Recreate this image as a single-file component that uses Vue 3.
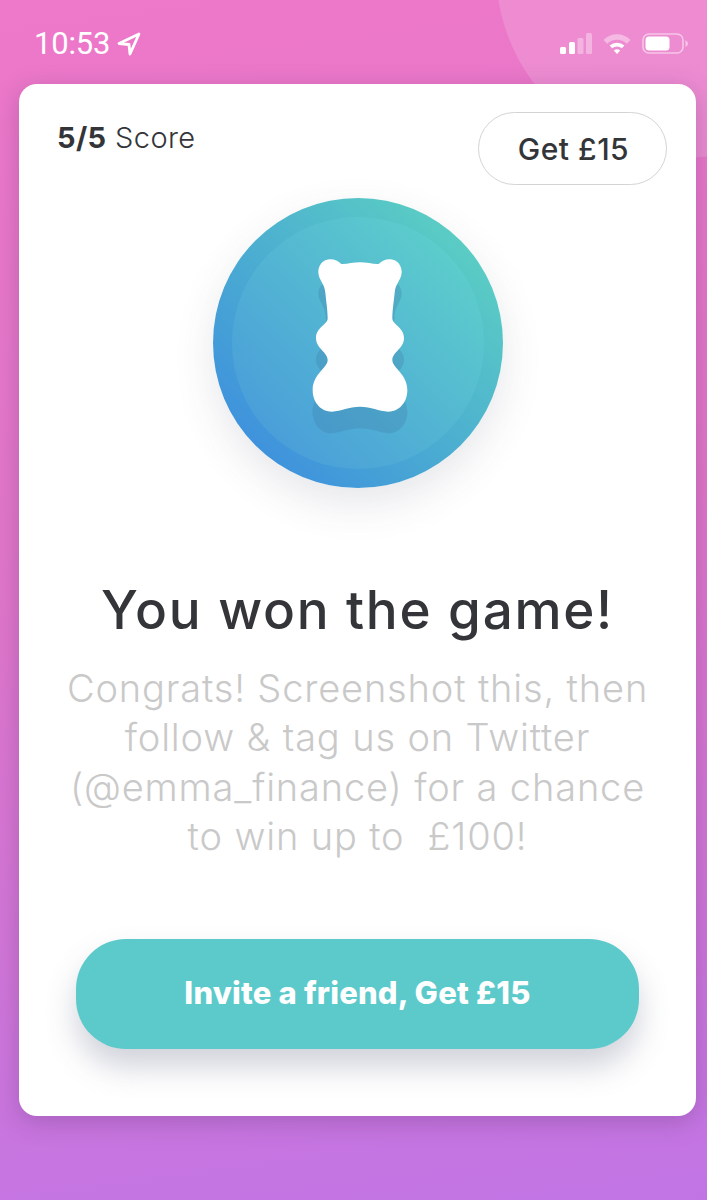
<script setup>
const lines = ['Congrats! Screenshot this, then', 'follow & tag us on Twitter', '(@emma_finance) for a chance', 'to win up to  £100!']
const bear = 'M180 37 C160 37 140 43 124 42 C114 32 102 27 88 28 C68 30 55 46 55 66 C55 90 74 100 76 128 C78 150 83 180 83 205 C83 224 48 232 48 264 C48 296 83 306 83 330 C83 354 38 372 38 420 C38 460 65 485 95 485 C125 483 145 470 180 470 C215 470 235 483 265 485 C295 485 322 460 322 420 C322 372 277 354 277 330 C277 306 312 296 312 264 C312 232 277 224 277 205 C277 180 282 150 284 128 C286 100 305 90 305 66 C305 46 292 30 272 28 C258 27 246 32 236 42 C220 43 200 37 180 37 Z'
</script>

<template>
  <div class="screen">
    <div class="deco"></div>
    <header class="status">
      <div class="clock">
        <span class="time">10:53</span>
        <svg class="arrow" width="24" height="24" viewBox="0 0 24 24">
          <path d="M22 2 L2 11.5 L12 12.5 L13 22 Z" fill="none" stroke="#fff" stroke-width="2.8" stroke-linejoin="round" />
        </svg>
      </div>
      <div class="indicators">
        <svg width="32" height="21" viewBox="0 0 32 21">
          <rect x="0" y="14" width="6" height="7" rx="1.5" fill="#fff" />
          <rect x="9" y="9" width="6" height="12" rx="1.5" fill="#fff" />
          <rect x="17.500" y="5" width="6" height="16" rx="1.5" fill="#fff" opacity=".35" />
          <rect x="26" y="0" width="6" height="21" rx="1.5" fill="#fff" opacity=".35" />
        </svg>
        <svg width="28" height="21" viewBox="0 0 28 21">
          <path d="M0.500 7 A19 19 0 0 1 27.500 7 L23.800 10.800 A14 14 0 0 0 4.200 10.800 Z" fill="#fff" opacity=".4" />
          <path d="M6.600 12.600 A11 11 0 0 1 21.400 12.600 L18.800 15.300 A7 7 0 0 0 9.200 15.300 Z" fill="#fff" />
          <path d="M14 21 L10.800 17.500 A5 5 0 0 1 17.200 17.500 Z" fill="#fff" />
        </svg>
        <svg width="46" height="21" viewBox="0 0 46 21">
          <rect x="1" y="1" width="40" height="19" rx="6" fill="none" stroke="#fff" stroke-opacity=".5" stroke-width="1.6" />
          <rect x="3.500" y="3.500" width="24" height="14" rx="3.500" fill="#fff" />
          <path d="M43.500 7 Q46 8.500 46 10.500 Q46 12.500 43.500 14 Z" fill="#fff" opacity=".5" />
        </svg>
      </div>
    </header>

    <main class="card">
      <div class="top">
        <p class="score"><strong>5/5</strong> Score</p>
        <button class="get">Get £15</button>
      </div>

      <div class="medal">
        <svg width="290" height="290" viewBox="39 24 870 870">
          <defs>
            <linearGradient id="outer" x1="0.15" y1="0.85" x2="0.85" y2="0.15">
              <stop offset="0" stop-color="#3f93dc" />
              <stop offset="1" stop-color="#5accc4" />
            </linearGradient>
            <linearGradient id="inner" x1="0.15" y1="0.85" x2="0.85" y2="0.15">
              <stop offset="0" stop-color="#4a9fd9" />
              <stop offset="1" stop-color="#5ccccc" />
            </linearGradient>
          </defs>
          <circle cx="474" cy="459" r="435" fill="url(#outer)" />
          <circle cx="474" cy="459" r="378" fill="url(#inner)" />
          <g transform="translate(300 180)">
            <path :d="bear" fill="#3f7fa8" opacity=".3" transform="translate(0 65)" />
            <path :d="bear" fill="#fff" />
          </g>
        </svg>
      </div>

      <h1 class="title">You won the game!</h1>
      <p class="body">
        <span v-for="line in lines" :key="line" class="line">{{ line }}</span>
      </p>

      <button class="invite">Invite a friend, Get £15</button>
    </main>
  </div>
</template>

<style>
html, body { margin: 0; padding: 0; }
</style>

<style scoped>
.screen {
  position: relative;
  width: 707px;
  height: 1200px;
  overflow: hidden;
  display: flex;
  flex-direction: column;
  align-items: flex-start;
  background: linear-gradient(172deg, #ee78c9 0%, #e076c9 45%, #c175e5 100%);
  font-family: "Inter", "Open Sans", sans-serif;
}
.deco {
  position: absolute;
  left: 496px;
  top: -218px;
  width: 376px;
  height: 376px;
  border-radius: 50%;
  background: rgba(255, 255, 255, 0.15);
}
.status {
  position: relative;
  box-sizing: border-box;
  width: 100%;
  height: 84px;
  padding: 0 19px 0 34px;
  display: flex;
  justify-content: space-between;
  align-items: flex-start;
}
.clock {
  margin-top: 25px;
  display: flex;
  align-items: center;
  gap: 7px;
  color: #fff;
}
.time {
  font-family: "Roboto", sans-serif;
  font-size: 31px;
  line-height: 38px;
  letter-spacing: -0.2px;
}
.indicators {
  margin-top: 33px;
  display: flex;
  align-items: center;
  gap: 11px;
}
.card {
  position: relative;
  box-sizing: border-box;
  width: 677px;
  height: 1032px;
  margin-left: 19px;
  border-radius: 18px;
  background: #fff;
  box-shadow: 0 6px 24px rgba(90, 50, 110, 0.3);
  display: flex;
  flex-direction: column;
  align-items: center;
}
.top {
  box-sizing: border-box;
  width: 100%;
  padding: 28px 29px 0 38px;
  display: flex;
  justify-content: space-between;
  align-items: flex-start;
}
.score {
  margin: 8px 0 0;
  font-size: 29px;
  line-height: 36px;
  color: #333539;
  font-weight: 300;
  letter-spacing: 0.4px;
}
.score strong { font-weight: 700; }
.get {
  box-sizing: border-box;
  width: 189px;
  height: 73px;
  border-radius: 37px;
  border: 1px solid #d4d4d4;
  background: #fff;
  color: #333539;
  font-family: inherit;
  font-size: 30px;
  font-weight: 500;
  letter-spacing: 0.5px;
  padding: 0 0 0 2px;
}
.medal {
  width: 290px;
  height: 290px;
  margin-top: 13px;
  border-radius: 50%;
  box-shadow: 0 16px 40px rgba(60, 70, 90, 0.13);
}
.medal svg { display: block; }
.title {
  margin: 92px 0 0;
  font-size: 53px;
  line-height: 60px;
  font-weight: 500;
  color: #333539;
  letter-spacing: 1.7px;
}
.body {
  margin: 24px 0 0;
  display: flex;
  flex-direction: column;
  align-items: center;
  font-size: 38px;
  line-height: 49.300px;
  font-weight: 300;
  letter-spacing: 0.85px;
  color: #c9c9c9;
  white-space: pre;
}
.line { display: block; }
.invite {
  margin-top: 78px;
  width: 563px;
  height: 110px;
  border: 0;
  padding: 0 0 4px;
  border-radius: 50px;
  background: #5ccacb;
  color: #fff;
  font-family: inherit;
  font-size: 31px;
  font-weight: 800;
  letter-spacing: 0.2px;
  box-shadow: 0 18px 30px rgba(70, 80, 110, 0.25);
}
</style>
